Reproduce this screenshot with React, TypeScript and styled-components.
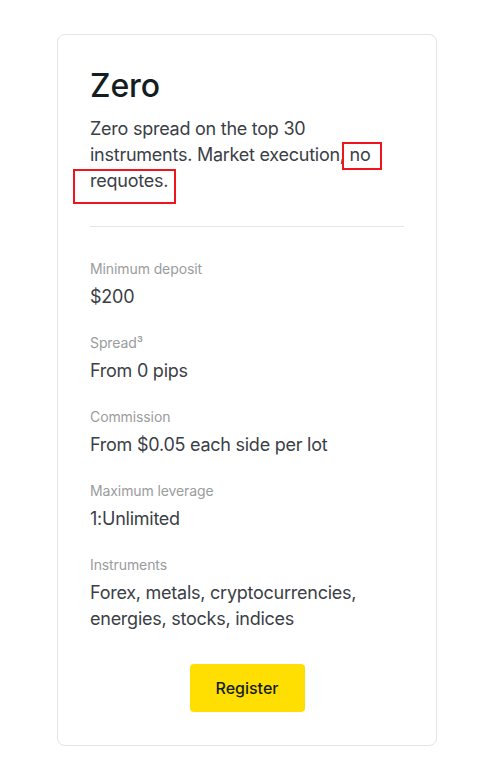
import React from "react";
import styled, { createGlobalStyle } from "styled-components";

const Global = createGlobalStyle`
  html, body { margin: 0; padding: 0; background: #ffffff; }
  body { font-family: Inter, "Noto Sans", sans-serif; -webkit-font-smoothing: antialiased; }
  * { box-sizing: border-box; }
`;

const Page = styled.div`
  padding: 34px 0 24px 57px;
`;

const Card = styled.section`
  width: 380px;
  border: 1px solid #e3e4e6;
  border-radius: 8px;
  padding: 31px 32px 33px;
  display: flex;
  flex-direction: column;
`;

const Title = styled.h2`
  margin: 0;
  font-size: 32px;
  line-height: 40px;
  font-weight: 500;
  color: #141d22;
  letter-spacing: -0.1px;
`;

const Desc = styled.p`
  position: relative;
  margin: 10px 0 0;
  font-size: 18px;
  line-height: 26px;
  color: #3b4046;
  letter-spacing: -0.25px;
`;

const Mark = styled.span<{ $x: number; $y: number; $w: number; $h: number }>`
  position: absolute;
  left: ${(p) => p.$x}px;
  top: ${(p) => p.$y}px;
  width: ${(p) => p.$w}px;
  height: ${(p) => p.$h}px;
  border: 2px solid #f0141e;
  pointer-events: none;
`;

const Divider = styled.hr`
  margin: 32px 0 31px;
  border: 0;
  height: 1px;
  background: #e4e5e7;
`;

const List = styled.dl`
  margin: 0;
  display: flex;
  flex-direction: column;
  gap: 22px;
`;

const Item = styled.div`
  display: flex;
  flex-direction: column;
  gap: 4px;
`;

const Label = styled.dt`
  font-size: 14px;
  line-height: 22px;
  color: #9a9c9e;
  letter-spacing: -0.1px;
`;

const Value = styled.dd`
  margin: 0;
  font-size: 18px;
  line-height: 26px;
  color: #3b4046;
  letter-spacing: -0.25px;
`;

const Actions = styled.div`
  display: flex;
  justify-content: center;
  margin-top: 32px;
`;

const Button = styled.button`
  width: 115px;
  height: 48px;
  border: 0;
  border-radius: 4px;
  background: #ffde02;
  color: #141d22;
  font-family: Inter, "Noto Sans", sans-serif;
  font-size: 16px;
  font-weight: 500;
  cursor: pointer;
`;

const rows: { label: string; value: string }[] = [
  { label: "Minimum deposit", value: "$200" },
  { label: "Spread³", value: "From 0 pips" },
  { label: "Commission", value: "From $0.05 each side per lot" },
  { label: "Maximum leverage", value: "1:Unlimited" },
  { label: "Instruments", value: "Forex, metals, cryptocurrencies, energies, stocks, indices" },
];

export default function App() {
  return (
    <>
      <Global />
      <Page>
        <Card>
          <Title>Zero</Title>
          <Desc>
            Zero spread on the top 30 instruments. Market execution, no requotes.
            <Mark $x={252} $y={26} $w={40} $h={28} />
            <Mark $x={-17} $y={53} $w={103} $h={35} />
          </Desc>
          <Divider />
          <List>
            {rows.map((r) => (
              <Item key={r.label}>
                <Label>{r.label}</Label>
                <Value>{r.value}</Value>
              </Item>
            ))}
          </List>
          <Actions>
            <Button>Register</Button>
          </Actions>
        </Card>
      </Page>
    </>
  );
}
